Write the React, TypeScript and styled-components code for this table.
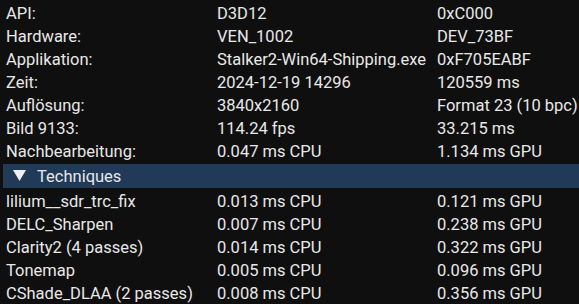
import styled, { createGlobalStyle } from "styled-components";

const GlobalStyle = createGlobalStyle`
  html, body {
    margin: 0;
    padding: 0;
    background: #0f0f0f;
  }
  body {
    font-family: Roboto, "Liberation Sans", sans-serif;
    font-size: 16.5px;
    color: #e8e8e8;
  }
`;

const Panel = styled.div`
  width: 579px;
  height: 304px;
  overflow: hidden;
  padding-top: 2px;
  box-sizing: border-box;
`;

const Row = styled.div`
  display: grid;
  grid-template-columns: 211px 220px 1fr;
  height: 23px;
  align-items: center;
  padding-left: 6px;
  white-space: nowrap;
`;

const Cell = styled.span`
  line-height: 23px;
`;

const Header = styled.div`
  display: flex;
  align-items: center;
  margin: 1px 0 2px 3px;
  height: 24px;
  background: #203a58;
  padding-left: 10px;
  gap: 11px;
`;

const Arrow = styled.svg`
  width: 13px;
  height: 12px;
  fill: #f0f0f0;
`;

const info: [string, string, string][] = [
  ["API:", "D3D12", "0xC000"],
  ["Hardware:", "VEN_1002", "DEV_73BF"],
  ["Applikation:", "Stalker2-Win64-Shipping.exe", "0xF705EABF"],
  ["Zeit:", "2024-12-19 14296", "120559 ms"],
  ["Auflösung:", "3840x2160", "Format 23 (10 bpc)"],
  ["Bild 9133:", "114.24 fps", "33.215 ms"],
  ["Nachbearbeitung:", "0.047 ms CPU", "1.134 ms GPU"],
];

const techniques: [string, string, string][] = [
  ["lilium__sdr_trc_fix", "0.013 ms CPU", "0.121 ms GPU"],
  ["DELC_Sharpen", "0.007 ms CPU", "0.238 ms GPU"],
  ["Clarity2 (4 passes)", "0.014 ms CPU", "0.322 ms GPU"],
  ["Tonemap", "0.005 ms CPU", "0.096 ms GPU"],
  ["CShade_DLAA (2 passes)", "0.008 ms CPU", "0.356 ms GPU"],
];

const App = () => (
  <>
    <GlobalStyle />
    <Panel>
      {info.map(([a, b, c]) => (
        <Row key={a}>
          <Cell>{a}</Cell>
          <Cell>{b}</Cell>
          <Cell>{c}</Cell>
        </Row>
      ))}
      <Header>
        <Arrow viewBox="0 0 13 12">
          <polygon points="0,0 13,0 6.5,11" />
        </Arrow>
        <span>Techniques</span>
      </Header>
      {techniques.map(([a, b, c]) => (
        <Row key={a}>
          <Cell>{a}</Cell>
          <Cell>{b}</Cell>
          <Cell>{c}</Cell>
        </Row>
      ))}
    </Panel>
  </>
);

export default App;
